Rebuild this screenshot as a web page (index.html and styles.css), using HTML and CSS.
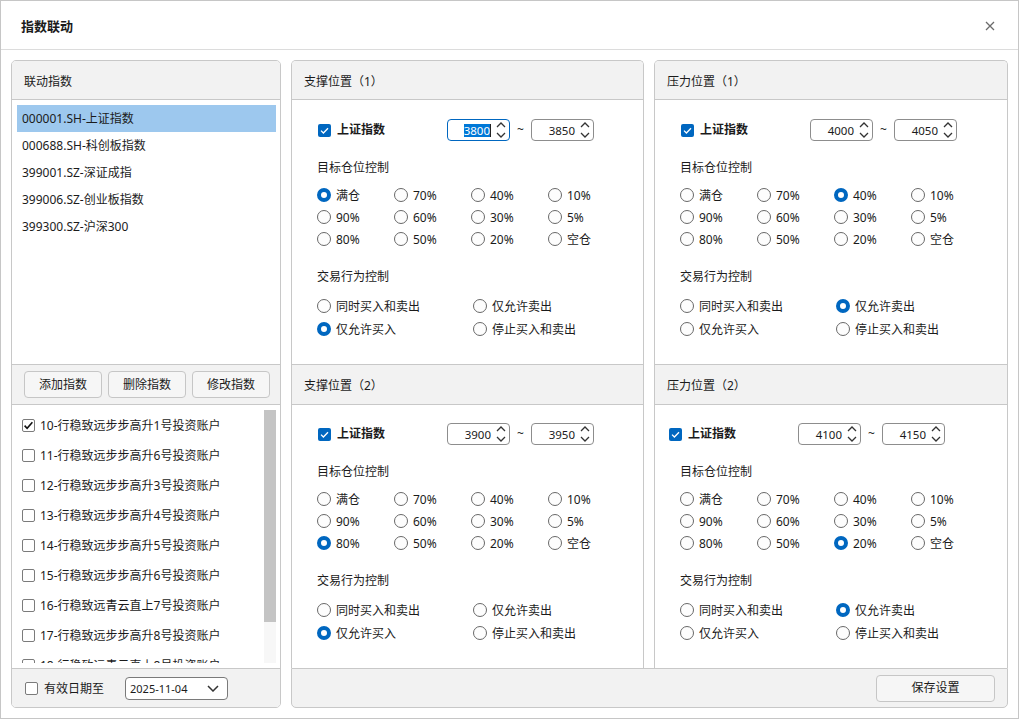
FILE: index.html
```html
<!DOCTYPE html>
<html lang="zh-CN">
<head>
<meta charset="utf-8">
<title>指数联动</title>
<link rel="stylesheet" href="styles.css">
</head>
<body>
<div class="window">
  <div class="titlebar">
    <span class="title">指数联动</span>
    <svg class="close" width="10" height="10" viewBox="0 0 10 10"><path d="M1 1L9 9M9 1L1 9" stroke="#6b6b6b" stroke-width="1.3" fill="none"/></svg>
  </div>
  <div class="main">
    <div class="left">
      <div class="panel-head">联动指数</div>
      <div class="index-list">
        <div class="index-item sel">000001.SH-上证指数</div>
        <div class="index-item">000688.SH-科创板指数</div>
        <div class="index-item">399001.SZ-深证成指</div>
        <div class="index-item">399006.SZ-创业板指数</div>
        <div class="index-item">399300.SZ-沪深300</div>
      </div>
      <div class="toolbar">
        <button class="btn">添加指数</button>
        <button class="btn">删除指数</button>
        <button class="btn">修改指数</button>
      </div>
      <div class="account-list">
        <div class="accounts">
          <div class="acc"><span class="cb cb-on"><svg width="13" height="13" viewBox="0 0 13 13"><path d="M2.6 6.6L5.1 9.2L10.4 3.2" stroke="#111" stroke-width="1.6" fill="none"/></svg></span>10-行稳致远步步高升1号投资账户</div>
          <div class="acc"><span class="cb"></span>11-行稳致远步步高升6号投资账户</div>
          <div class="acc"><span class="cb"></span>12-行稳致远步步高升3号投资账户</div>
          <div class="acc"><span class="cb"></span>13-行稳致远步步高升4号投资账户</div>
          <div class="acc"><span class="cb"></span>14-行稳致远步步高升5号投资账户</div>
          <div class="acc"><span class="cb"></span>15-行稳致远步步高升6号投资账户</div>
          <div class="acc"><span class="cb"></span>16-行稳致远青云直上7号投资账户</div>
          <div class="acc"><span class="cb"></span>17-行稳致远步步高升8号投资账户</div>
          <div class="acc"><span class="cb"></span>18-行稳致远青云直上8号投资账户</div>
        </div>
        <div class="scrollbar"><div class="thumb"></div></div>
      </div>
      <div class="left-foot">
        <label class="foot-chk"><span class="cb"></span>有效日期至</label>
        <div class="date">
          <span>2025-11-04</span>
          <svg width="12" height="7" viewBox="0 0 12 7"><path d="M1 1L6 6L11 1" stroke="#333" stroke-width="1.5" fill="none"/></svg>
        </div>
      </div>
    </div>

    <div class="rgroup">
      <div class="cols">
        <div class="col col-mid">
          <div class="sec-head">支撑位置（1）</div>
          <div class="sec-body">
            <div class="chkrow">
              <div class="chk-label"><span class="cbb"><svg width="13" height="13" viewBox="0 0 13 13"><path d="M3 6.6L5.4 9L10 4.2" stroke="#fff" stroke-width="1.3" fill="none"/></svg></span>上证指数</div>
              <div class="spin focus"><span class="val selected">3800</span><span class="caret"></span><svg class="arrows" width="10" height="18" viewBox="0 0 10 18"><path d="M1 6L5 2L9 6M1 12L5 16L9 12" stroke="#333" stroke-width="1.3" fill="none"/></svg></div>
              <span class="tilde">~</span>
              <div class="spin"><span class="val">3850</span><svg class="arrows" width="10" height="18" viewBox="0 0 10 18"><path d="M1 6L5 2L9 6M1 12L5 16L9 12" stroke="#333" stroke-width="1.3" fill="none"/></svg></div>
            </div>
            <div class="sec-label">目标仓位控制</div>
            <div class="grid4">
              <div class="ri"><span class="radio on"></span>满仓</div>
              <div class="ri"><span class="radio"></span>70%</div>
              <div class="ri"><span class="radio"></span>40%</div>
              <div class="ri"><span class="radio"></span>10%</div>
              <div class="ri"><span class="radio"></span>90%</div>
              <div class="ri"><span class="radio"></span>60%</div>
              <div class="ri"><span class="radio"></span>30%</div>
              <div class="ri"><span class="radio"></span>5%</div>
              <div class="ri"><span class="radio"></span>80%</div>
              <div class="ri"><span class="radio"></span>50%</div>
              <div class="ri"><span class="radio"></span>20%</div>
              <div class="ri"><span class="radio"></span>空仓</div>
            </div>
            <div class="sec-label">交易行为控制</div>
            <div class="grid2">
              <div class="ri"><span class="radio"></span>同时买入和卖出</div>
              <div class="ri"><span class="radio"></span>仅允许卖出</div>
              <div class="ri"><span class="radio on"></span>仅允许买入</div>
              <div class="ri"><span class="radio"></span>停止买入和卖出</div>
            </div>
          </div>
          <div class="sec-head head2">支撑位置（2）</div>
          <div class="sec-body b2">
            <div class="chkrow">
              <div class="chk-label"><span class="cbb"><svg width="13" height="13" viewBox="0 0 13 13"><path d="M3 6.6L5.4 9L10 4.2" stroke="#fff" stroke-width="1.3" fill="none"/></svg></span>上证指数</div>
              <div class="spin"><span class="val">3900</span><svg class="arrows" width="10" height="18" viewBox="0 0 10 18"><path d="M1 6L5 2L9 6M1 12L5 16L9 12" stroke="#333" stroke-width="1.3" fill="none"/></svg></div>
              <span class="tilde">~</span>
              <div class="spin"><span class="val">3950</span><svg class="arrows" width="10" height="18" viewBox="0 0 10 18"><path d="M1 6L5 2L9 6M1 12L5 16L9 12" stroke="#333" stroke-width="1.3" fill="none"/></svg></div>
            </div>
            <div class="sec-label">目标仓位控制</div>
            <div class="grid4">
              <div class="ri"><span class="radio"></span>满仓</div>
              <div class="ri"><span class="radio"></span>70%</div>
              <div class="ri"><span class="radio"></span>40%</div>
              <div class="ri"><span class="radio"></span>10%</div>
              <div class="ri"><span class="radio"></span>90%</div>
              <div class="ri"><span class="radio"></span>60%</div>
              <div class="ri"><span class="radio"></span>30%</div>
              <div class="ri"><span class="radio"></span>5%</div>
              <div class="ri"><span class="radio on"></span>80%</div>
              <div class="ri"><span class="radio"></span>50%</div>
              <div class="ri"><span class="radio"></span>20%</div>
              <div class="ri"><span class="radio"></span>空仓</div>
            </div>
            <div class="sec-label">交易行为控制</div>
            <div class="grid2">
              <div class="ri"><span class="radio"></span>同时买入和卖出</div>
              <div class="ri"><span class="radio"></span>仅允许卖出</div>
              <div class="ri"><span class="radio on"></span>仅允许买入</div>
              <div class="ri"><span class="radio"></span>停止买入和卖出</div>
            </div>
          </div>
        </div>

        <div class="col col-right">
          <div class="sec-head">压力位置（1）</div>
          <div class="sec-body">
            <div class="chkrow">
              <div class="chk-label"><span class="cbb"><svg width="13" height="13" viewBox="0 0 13 13"><path d="M3 6.6L5.4 9L10 4.2" stroke="#fff" stroke-width="1.3" fill="none"/></svg></span>上证指数</div>
              <div class="spin"><span class="val">4000</span><svg class="arrows" width="10" height="18" viewBox="0 0 10 18"><path d="M1 6L5 2L9 6M1 12L5 16L9 12" stroke="#333" stroke-width="1.3" fill="none"/></svg></div>
              <span class="tilde">~</span>
              <div class="spin"><span class="val">4050</span><svg class="arrows" width="10" height="18" viewBox="0 0 10 18"><path d="M1 6L5 2L9 6M1 12L5 16L9 12" stroke="#333" stroke-width="1.3" fill="none"/></svg></div>
            </div>
            <div class="sec-label">目标仓位控制</div>
            <div class="grid4">
              <div class="ri"><span class="radio"></span>满仓</div>
              <div class="ri"><span class="radio"></span>70%</div>
              <div class="ri"><span class="radio on"></span>40%</div>
              <div class="ri"><span class="radio"></span>10%</div>
              <div class="ri"><span class="radio"></span>90%</div>
              <div class="ri"><span class="radio"></span>60%</div>
              <div class="ri"><span class="radio"></span>30%</div>
              <div class="ri"><span class="radio"></span>5%</div>
              <div class="ri"><span class="radio"></span>80%</div>
              <div class="ri"><span class="radio"></span>50%</div>
              <div class="ri"><span class="radio"></span>20%</div>
              <div class="ri"><span class="radio"></span>空仓</div>
            </div>
            <div class="sec-label">交易行为控制</div>
            <div class="grid2">
              <div class="ri"><span class="radio"></span>同时买入和卖出</div>
              <div class="ri"><span class="radio on"></span>仅允许卖出</div>
              <div class="ri"><span class="radio"></span>仅允许买入</div>
              <div class="ri"><span class="radio"></span>停止买入和卖出</div>
            </div>
          </div>
          <div class="sec-head head2">压力位置（2）</div>
          <div class="sec-body b2">
            <div class="chkrow shift">
              <div class="chk-label"><span class="cbb"><svg width="13" height="13" viewBox="0 0 13 13"><path d="M3 6.6L5.4 9L10 4.2" stroke="#fff" stroke-width="1.3" fill="none"/></svg></span>上证指数</div>
              <div class="spin"><span class="val">4100</span><svg class="arrows" width="10" height="18" viewBox="0 0 10 18"><path d="M1 6L5 2L9 6M1 12L5 16L9 12" stroke="#333" stroke-width="1.3" fill="none"/></svg></div>
              <span class="tilde">~</span>
              <div class="spin"><span class="val">4150</span><svg class="arrows" width="10" height="18" viewBox="0 0 10 18"><path d="M1 6L5 2L9 6M1 12L5 16L9 12" stroke="#333" stroke-width="1.3" fill="none"/></svg></div>
            </div>
            <div class="sec-label">目标仓位控制</div>
            <div class="grid4">
              <div class="ri"><span class="radio"></span>满仓</div>
              <div class="ri"><span class="radio"></span>70%</div>
              <div class="ri"><span class="radio"></span>40%</div>
              <div class="ri"><span class="radio"></span>10%</div>
              <div class="ri"><span class="radio"></span>90%</div>
              <div class="ri"><span class="radio"></span>60%</div>
              <div class="ri"><span class="radio"></span>30%</div>
              <div class="ri"><span class="radio"></span>5%</div>
              <div class="ri"><span class="radio"></span>80%</div>
              <div class="ri"><span class="radio"></span>50%</div>
              <div class="ri"><span class="radio on"></span>20%</div>
              <div class="ri"><span class="radio"></span>空仓</div>
            </div>
            <div class="sec-label">交易行为控制</div>
            <div class="grid2">
              <div class="ri"><span class="radio"></span>同时买入和卖出</div>
              <div class="ri"><span class="radio on"></span>仅允许卖出</div>
              <div class="ri"><span class="radio"></span>仅允许买入</div>
              <div class="ri"><span class="radio"></span>停止买入和卖出</div>
            </div>
          </div>
        </div>
      </div>
      <div class="gfoot"><button class="btn save">保存设置</button></div>
    </div>
  </div>
</div>
</body>
</html>
```

FILE: styles.css
```css
* { box-sizing: border-box; }
body {
  margin: 0;
  font-family: "Noto Sans", "Noto Sans CJK SC", sans-serif;
  font-size: 12px;
  color: #1b1b1b;
  background: #fff;
}
.window {
  width: 1019px;
  height: 719px;
  border: 1px solid #c6c6c6;
  background: #fff;
  display: flex;
  flex-direction: column;
}
.titlebar {
  height: 49px;
  border-bottom: 1px solid #dcdcdc;
  display: flex;
  align-items: center;
  justify-content: space-between;
  padding: 2px 23px 0 20px;
}
.title { font-weight: 700; font-size: 13px; line-height: 16px; }
.close { display: block; }

.main {
  flex: 1;
  display: flex;
  gap: 10px;
  padding: 10px;
  min-height: 0;
}
.left {
  width: 270px;
  border: 1px solid #c8c8c8;
  border-radius: 5px;
  display: flex;
  flex-direction: column;
  overflow: hidden;
}
.panel-head, .sec-head {
  height: 39px;
  flex: none;
  border-bottom: 1px solid #c8c8c8;
  background: #f2f2f2;
  display: flex;
  align-items: center;
  padding: 3px 0 0 12px;
  line-height: 16px;
}
.sec-head.head2 { height: 40px; }
.index-list {
  height: 265px;
  flex: none;
  border-bottom: 1px solid #c8c8c8;
  padding: 5px 4px 5px 5px;
}
.index-item {
  height: 27px;
  line-height: 27px;
  padding-left: 5px;
  white-space: nowrap;
}
.index-item.sel { background: #9dc8ee; }

.toolbar {
  height: 40px;
  flex: none;
  border-bottom: 1px solid #c8c8c8;
  background: #f2f2f2;
  display: flex;
  align-items: center;
  gap: 6px;
  padding-left: 12px;
}
.btn {
  width: 78px;
  height: 27px;
  border: 1px solid #c6c6c6;
  border-radius: 4px;
  background: #f6f6f6;
  font-family: inherit;
  font-size: 12px;
  color: #1b1b1b;
  padding: 0;
  line-height: 16px;
}
.account-list {
  height: 264px;
  flex: none;
  border-bottom: 1px solid #c8c8c8;
  padding: 5px 4px 5px 5px;
  display: flex;
}
.accounts {
  flex: 1;
  overflow: hidden;
}
.acc {
  height: 30px;
  display: flex;
  align-items: center;
  gap: 5px;
  padding-left: 5px;
  white-space: nowrap;
}
.cb {
  width: 13px;
  height: 13px;
  flex: none;
  border: 1px solid #7b7b7b;
  border-radius: 2px;
  background: #fff;
  position: relative;
}
.cb svg { position: absolute; left: -1px; top: -1px; }
.scrollbar {
  width: 12px;
  flex: none;
  background: #f7f7f7;
}
.thumb {
  height: 212px;
  background: #c4c4c4;
}
.left-foot {
  flex: 1;
  background: #f2f2f2;
  display: flex;
  align-items: center;
  padding-left: 13px;
}
.foot-chk {
  width: 100px;
  display: flex;
  align-items: center;
  gap: 6px;
}
.date {
  width: 103px;
  height: 23px;
  border: 1px solid #7a7a7a;
  border-radius: 4px;
  background: #fff;
  display: flex;
  align-items: center;
  justify-content: space-between;
  padding: 0 8px 0 4px;
  font-size: 11px;
}
.date svg { display: block; }

.rgroup {
  flex: 1;
  display: flex;
  flex-direction: column;
}
.cols {
  flex: 1;
  display: flex;
  gap: 10px;
  min-height: 0;
}
.col {
  border: 1px solid #c8c8c8;
  border-bottom: none;
  border-radius: 5px 5px 0 0;
  display: flex;
  flex-direction: column;
  overflow: hidden;
}
.col-mid { width: 353px; }
.col-right { flex: 1; }
.sec-body {
  height: 265px;
  flex: none;
  border-bottom: 1px solid #c8c8c8;
  padding-top: 19px;
}
.sec-body.b2 {
  flex: 1;
  height: auto;
  border-bottom: none;
  padding-top: 18px;
}
.chkrow {
  height: 22px;
  display: flex;
  align-items: center;
  padding-left: 26px;
}
.chkrow.shift { padding-left: 14px; }
.chk-label {
  width: 129px;
  display: flex;
  align-items: center;
  gap: 6px;
  font-weight: 700;
  line-height: 16px;
}
.cbb {
  width: 13px;
  height: 13px;
  border-radius: 2px;
  background: #0067c0;
  flex: none;
}
.cbb svg { display: block; }
.spin {
  width: 63px;
  height: 22px;
  border: 1px solid #8d8d8d;
  border-radius: 4px;
  background: #fff;
  display: flex;
  align-items: center;
  justify-content: flex-end;
  padding-right: 3px;
  font-size: 11.5px;
}
.spin.focus { border-color: #0067c0; }
.val { line-height: 13px; }
.val.selected { background: #0078d7; color: #fff; }
.caret { width: 1px; height: 13px; background: #222; }
.arrows { display: block; margin-left: 5px; }
.tilde {
  width: 21px;
  text-align: center;
  line-height: 16px;
}
.sec-label {
  margin-top: 17px;
  line-height: 20px;
  padding-left: 25px;
}
.grid4 {
  margin-top: 6px;
  padding-left: 25px;
  display: grid;
  grid-template-columns: repeat(4, 77px);
  grid-auto-rows: 22px;
}
.grid2 {
  margin-top: 7px;
  padding-left: 25px;
  display: grid;
  grid-template-columns: repeat(2, 156px);
  grid-auto-rows: 23px;
}
.ri {
  display: flex;
  align-items: center;
  gap: 5px;
  white-space: nowrap;
}
.radio {
  width: 14px;
  height: 14px;
  flex: none;
  border: 1px solid #686868;
  border-radius: 50%;
  background: #fdfdfd;
}
.radio.on {
  border: 4px solid #0067c0;
  background: #fff;
}
.gfoot {
  height: 40px;
  flex: none;
  border: 1px solid #c8c8c8;
  border-radius: 0 0 5px 5px;
  background: #f2f2f2;
  display: flex;
  justify-content: flex-end;
  align-items: center;
  padding-right: 12px;
}
.btn.save { width: 119px; height: 27px; }
```
